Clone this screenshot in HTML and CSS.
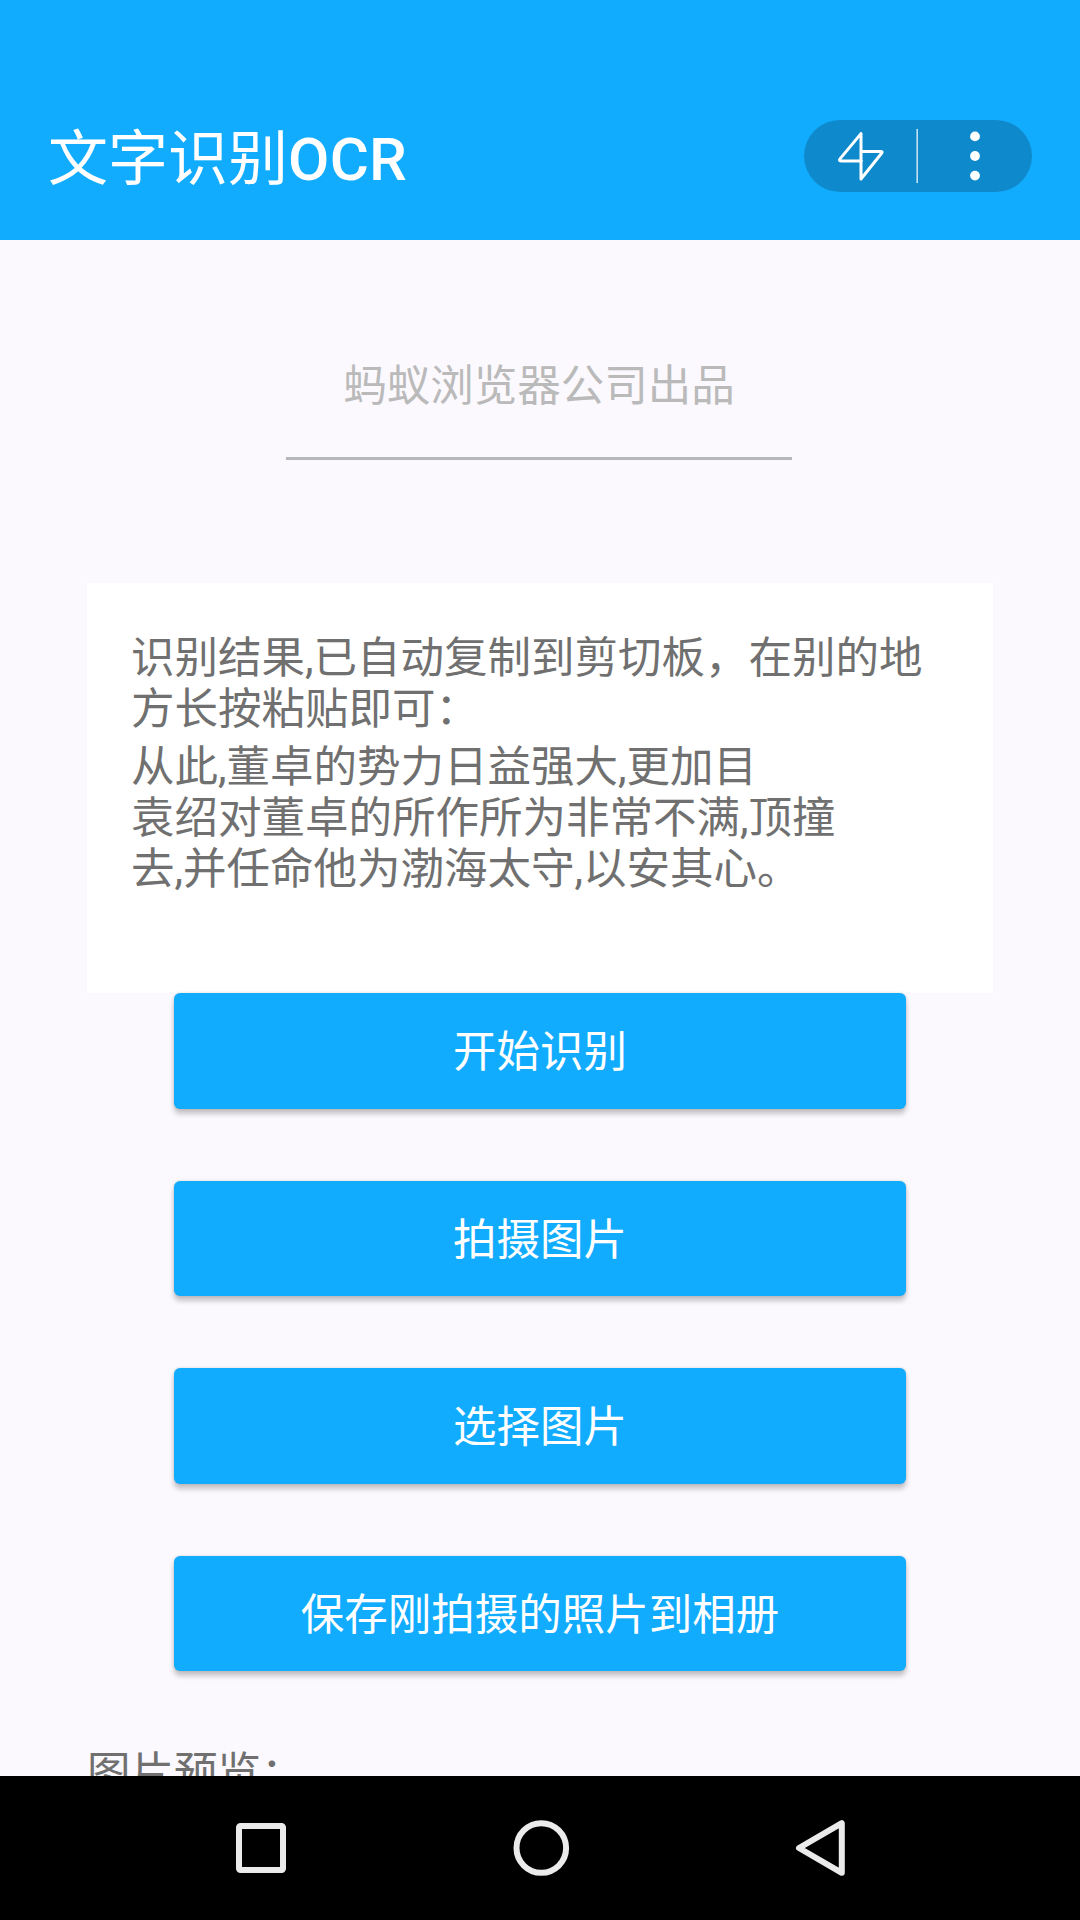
FILE: index.html
```html
<!DOCTYPE html>
<html lang="zh-CN">
<head>
<meta charset="utf-8">
<title>文字识别OCR</title>
<link rel="stylesheet" href="styles.css">
</head>
<body>
<header class="app-bar">
  <h1 class="title">文字识别<span class="latin">OCR</span></h1>
  <div class="capsule">
    <svg class="capsule-icons" viewBox="0 0 228 72" fill="none">
      <path d="M57 13.6 L36.2 38.6 Q34.4 41 37 41 H57.5 M57 13.6 V59 L77.6 33.2 Q79 31.4 76.6 31.4 H57.5" stroke="#fff" stroke-width="3" stroke-linejoin="round" stroke-linecap="round"/>
      <path d="M113.2 9 V63" stroke="#fff" stroke-opacity=".75" stroke-width="1.6"/>
      <g fill="#fff"><circle cx="171" cy="16.4" r="4.9"/><circle cx="171" cy="36" r="4.9"/><circle cx="171" cy="55.6" r="4.9"/></g>
    </svg>
  </div>
</header>
<main class="content">
  <div class="field">蚂蚁浏览器公司出品</div>
  <section class="result">
    <p>识别结果,已自动复制到剪切板，在别的地<br>方长按粘贴即可：</p>
    <p>从此,董卓的势力日益强大,更加目<br>袁绍对董卓的所作所为非常不满,顶撞<br>去,并任命他为渤海太守,以安其心。</p>
  </section>
  <div class="actions">
    <button class="btn">开始识别</button>
    <button class="btn">拍摄图片</button>
    <button class="btn">选择图片</button>
    <button class="btn">保存刚拍摄的照片到相册</button>
  </div>
  <p class="preview">图片预览：</p>
</main>
<nav class="nav-bar">
  <svg class="nav-icon" viewBox="0 0 60 60"><rect x="8" y="8" width="44" height="44" rx="1.5"/></svg>
  <svg class="nav-icon" viewBox="0 0 60 60"><circle cx="31.3" cy="30" r="24.8"/></svg>
  <svg class="nav-icon" viewBox="0 0 60 60"><path d="M52.8 5.2 V54.8 L10 30 Z"/></svg>
</nav>
</body>
</html>
```
FILE: styles.css
```css
* { box-sizing: border-box; margin: 0; padding: 0; }

body {
  width: 1080px;
  height: 1920px;
  overflow: hidden;
  display: flex;
  flex-direction: column;
  background: #fbf9fe;
  color: #707070;
  font: 43.5px/51px Roboto, "Noto Sans CJK SC", sans-serif;
}

.app-bar {
  flex: none;
  height: 240px;
  padding: 72px 48px 0;
  display: flex;
  align-items: center;
  justify-content: space-between;
  background: #12acff;
  color: #fff;
}

.title { font-size: 60px; font-weight: 400; line-height: 84px; padding-top: 8px; }
.latin { font-weight: 500; letter-spacing: .3px; }

.capsule {
  width: 228px;
  height: 72px;
  border-radius: 36px;
  background: #0e8acc;
}
.capsule-icons { display: block; width: 228px; height: 72px; }

.content {
  flex: 1;
  min-height: 0;
  overflow: hidden;
  display: flex;
  flex-direction: column;
  align-items: center;
}

.field {
  flex: none;
  width: 506px;
  height: 124px;
  margin: 96px 2px 0 0;
  padding-top: 25px;
  border-bottom: 3px solid #b5b7b8;
  text-align: center;
  color: #bababa;
}

.result {
  flex: none;
  width: 906px;
  height: 410px;
  margin-top: 123px;
  padding: 50px 44px;
  display: flex;
  flex-direction: column;
  gap: 7px;
  background: #fff;
  white-space: nowrap;
}

.actions { flex: none; display: flex; flex-direction: column; gap: 72px; }

.btn {
  width: 732px;
  height: 115.5px;
  padding-top: 4px;
  border: 0;
  border-radius: 6px;
  background: #12acff;
  color: #fff;
  font: inherit;
  box-shadow: 0 5px 5px rgba(60, 50, 50, .27), 0 0 3px rgba(60, 50, 50, .18);
}

.preview { flex: none; width: 906px; margin-top: 77px; }

.nav-bar {
  flex: none;
  height: 144px;
  padding: 0 201px;
  display: flex;
  align-items: center;
  justify-content: space-between;
  background: #000;
}
.nav-icon {
  width: 120px;
  height: 60px;
  fill: none;
  stroke: #ebebeb;
  stroke-width: 6;
  stroke-linejoin: round;
}
```
